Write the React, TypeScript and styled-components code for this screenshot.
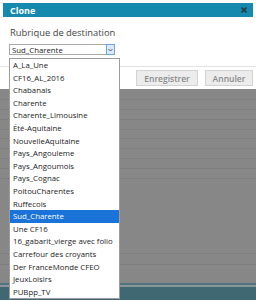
import React from "react";
import styled, { createGlobalStyle } from "styled-components";

const Global = createGlobalStyle`
  html, body { margin: 0; padding: 0; }
  body {
    width: 256px;
    height: 300px;
    overflow: hidden;
    background: #ffffff;
    font-family: "Open Sans", "DejaVu Sans", sans-serif;
  }
`;

const Page = styled.div`
  position: relative;
  width: 256px;
  height: 300px;
  display: flex;
  flex-direction: column;
  overflow: hidden;
`;

const Dialog = styled.div`
  background: #ffffff;
  padding: 3px 3px 0;
  height: 89px;
  box-sizing: border-box;
  display: flex;
  flex-direction: column;
`;

const TitleBar = styled.div`
  height: 14px;
  background: #1689ae;
  display: flex;
  align-items: center;
  justify-content: space-between;
  padding: 0 6px 0 7px;
  color: #ffffff;
  font-weight: 700;
  font-size: 9px;
`;

const Close = styled.span`
  width: 7px;
  height: 7px;
  display: flex;
  align-items: center;
  justify-content: center;
`;

const Content = styled.div`
  padding: 10px 6px 0;
  height: 39px;
  box-sizing: border-box;
`;

const Label = styled.div`
  font-size: 9.4px;
  color: #444444;
  line-height: 12px;
  margin-left: 1px;
`;

const SelectBox = styled.div`
  margin-top: 5px;
  width: 106px;
  height: 11px;
  box-sizing: border-box;
  border: 1px solid #a9a9a9;
  display: flex;
  align-items: center;
  justify-content: space-between;
  font-size: 7.8px;
  color: #222222;
  padding-left: 2px;
`;

const Arrow = styled.span`
  width: 9px;
  height: 11px;
  margin-right: -1px;
  box-sizing: border-box;
  border: 1px solid #6aa6e0;
  background: #dbeaf8;
  display: flex;
  align-items: center;
  justify-content: center;
`;

const Footer = styled.div`
  margin: 10px -3px 0;
  border-top: 1px solid #e2e2e2;
  display: flex;
  justify-content: flex-end;
  gap: 7px;
  padding: 3px 3px 0;
`;

const Button = styled.button<{ $w: number }>`
  width: ${p => p.$w}px;
  height: 16px;
  padding: 0;
  border: 1px solid #d3d3d3;
  background: #ececec;
  color: #8a8a8a;
  font-family: "Open Sans", "DejaVu Sans", sans-serif;
  font-size: 8.5px;
  font-weight: 600;
`;

const Backdrop = styled.div`
  flex: 1;
  background: #878787;
  display: flex;
  flex-direction: column;
`;

const Row = styled.div<{ $h: number }>`
  height: ${p => p.$h}px;
  border-bottom: 1px solid #7f7f7f;
  flex-shrink: 0;
`;

const Filler = styled.div`
  flex: 1;
`;

const BottomLine = styled.div`
  height: 2px;
  background: #4f7480;
  border-bottom: 2px solid #8a9598;
`;

const BottomBar = styled.div`
  height: 13px;
  background: #3f6872;
`;

const List = styled.ul`
  position: absolute;
  left: 9px;
  top: 58px;
  width: 111px;
  margin: 0;
  padding: 0;
  list-style: none;
  box-sizing: border-box;
  border: 1px solid #9c9c9c;
  background: #ffffff;
`;

const Item = styled.li<{ $active?: boolean }>`
  height: 12.6px;
  line-height: 12.6px;
  padding-left: 3px;
  font-size: 7.8px;
  white-space: nowrap;
  overflow: hidden;
  color: ${p => (p.$active ? "#ffffff" : "#222222")};
  background: ${p => (p.$active ? "#1a73d9" : "transparent")};
`;

const items = [
  "A_La_Une",
  "CF16_AL_2016",
  "Chabanais",
  "Charente",
  "Charente_Limousine",
  "Été-Aquitaine",
  "NouvelleAquitaine",
  "Pays_Angouleme",
  "Pays_Angoumois",
  "Pays_Cognac",
  "PoitouCharentes",
  "Ruffecois",
  "Sud_Charente",
  "Une CF16",
  "16_gabarit_vierge avec folio",
  "Carrefour des croyants",
  "Der FranceMonde CFEO",
  "JeuxLoisirs",
  "PUBpp_TV",
];

const rows = [10, 9, 9, 9, 8, 9, 9, 9, 9];

export default function App() {
  return (
    <Page>
      <Global />
      <Dialog>
        <TitleBar>
          <span>Clone</span>
          <Close>
            <svg width="6" height="6" viewBox="0 0 6 6">
              <path d="M0.5 0.5 L5.5 5.5 M5.5 0.5 L0.5 5.5" stroke="#2b3a40" strokeWidth="1.6" />
            </svg>
          </Close>
        </TitleBar>
        <Content>
          <Label>Rubrique de destination</Label>
          <SelectBox>
            <span>Sud_Charente</span>
            <Arrow>
              <svg width="5" height="4" viewBox="0 0 5 4">
                <path d="M0.5 1 L2.5 3 L4.5 1" fill="none" stroke="#4a5a6a" strokeWidth="1" />
              </svg>
            </Arrow>
          </SelectBox>
        </Content>
        <Footer>
          <Button $w={62}>Enregistrer</Button>
          <Button $w={48}>Annuler</Button>
        </Footer>
      </Dialog>
      <Backdrop>
        {rows.map((h, i) => (
          <Row key={i} $h={h} />
        ))}
        <Row $h={74} />
        <Row $h={10} />
        <Filler />
        <BottomLine />
        <BottomBar />
      </Backdrop>
      <List>
        {items.map(t => (
          <Item key={t} $active={t === "Sud_Charente"}>
            {t}
          </Item>
        ))}
      </List>
    </Page>
  );
}
